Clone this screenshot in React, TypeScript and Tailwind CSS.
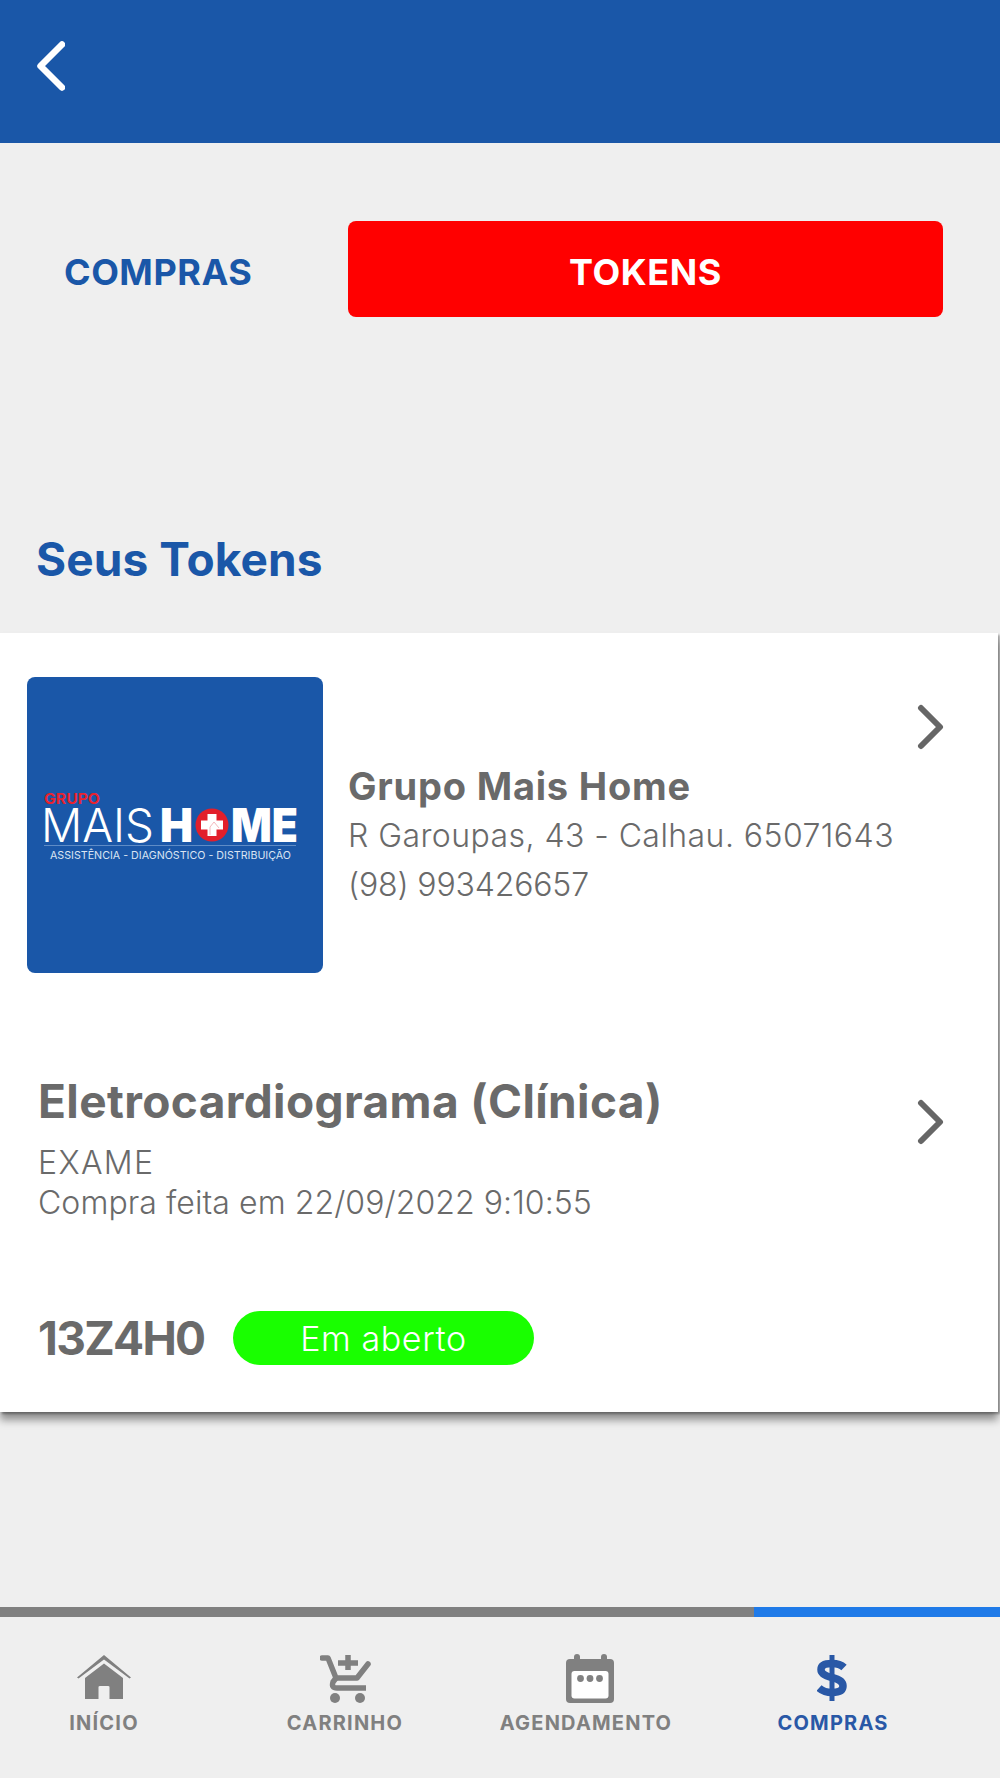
const font = "font-['Inter','Liberation_Sans',sans-serif]";

const Chevron = ({ className = "" }: { className?: string }) => (
  <svg viewBox="0 0 28 46" className={`h-[46px] w-[28px] shrink-0 ${className}`} fill="none" stroke="#666666" strokeWidth="6" strokeLinecap="round" strokeLinejoin="round">
    <path d="M4 4 L23 23 L4 42" />
  </svg>
);

const HomeIcon = () => (
  <svg viewBox="0 0 54 46" className="h-[46px] w-[54px]" fill="#808080">
    <path d="M0 22.5 L27 0 L54 22.5 L52.5 23.5 L27 4.5 L1.5 23.5 Z" />
    <path d="M8 23 L27 8.5 L46 23 V44 H32.5 V32 Q32.5 31 31 31 H23 Q21.5 31 21.5 32 V44 H8 Z" />
  </svg>
);

const CartIcon = () => (
  <svg viewBox="0 0 52 50" className="ml-[2px] h-[50px] w-[52px]" fill="none" stroke="#808080" strokeWidth="5.5" strokeLinecap="round" strokeLinejoin="round">
    <path d="M2 5 H8 L16 25 H37 L48 11" />
    <path d="M16 25 L13 29 Q11 35 17 35 H46" strokeLinecap="butt" />
    <path d="M28 2 V17 M18 10 H38" strokeLinecap="butt" strokeLinejoin="miter" />
    <circle cx="15" cy="45" r="5" fill="#808080" stroke="none" />
    <circle cx="40" cy="45" r="5" fill="#808080" stroke="none" />
  </svg>
);

const CalendarIcon = () => (
  <svg viewBox="0 0 48 49" className="ml-[7px] h-[49px] w-[48px]">
    <rect x="8" y="0" width="6" height="10" rx="3" fill="#808080" />
    <rect x="35" y="0" width="6" height="10" rx="3" fill="#808080" />
    <rect x="0" y="5" width="48" height="44" rx="4" fill="#808080" />
    <rect x="5.5" y="17" width="37" height="27.5" rx="3" fill="#ffffff" />
    <circle cx="14.5" cy="24.5" r="3.4" fill="#808080" />
    <circle cx="24" cy="24.5" r="3.4" fill="#808080" />
    <circle cx="33.5" cy="24.5" r="3.4" fill="#808080" />
  </svg>
);

const DollarIcon = () => (
  <svg viewBox="0 0 30 46" className="-ml-[2px] h-[46px] w-[30px]" fill="none" stroke="#2958a6" strokeWidth="7.5">
    <path d="M27 12.5 Q23 8.5 15 8.5 Q4 8.5 4 14.5 Q4 20 15 22.5 Q26 25 26 31 Q26 37.5 15 37.5 Q7 37.5 2 33" />
    <path d="M15 0 V46" strokeWidth="5" />
  </svg>
);

// logo is a picture in the reference, so it stays one drawing
const Logo = () => (
  <div className="h-[296px] w-[296px] shrink-0 overflow-hidden rounded-lg bg-[#1a57a8]">
    <svg viewBox="0 0 296 296" className="h-full w-full">
      <text x="17" y="127" fontFamily="Inter" fontWeight="700" fontSize="15" fill="#e8232f" textLength="56" lengthAdjust="spacingAndGlyphs">GRUPO</text>
      <text x="14" y="165" fontFamily="Inter" fontWeight="300" fontSize="47" fill="#ffffff" textLength="113" lengthAdjust="spacingAndGlyphs">MAIS</text>
      <text x="133" y="165" fontFamily="Inter" fontWeight="900" fontSize="47" fill="#ffffff" textLength="33" lengthAdjust="spacingAndGlyphs">H</text>
      <text x="204" y="165" fontFamily="Inter" fontWeight="900" fontSize="47" fill="#ffffff" textLength="67" lengthAdjust="spacingAndGlyphs">ME</text>
      <circle cx="185" cy="148" r="16.5" fill="#e21f2b" />
      <path d="M180.5 137 h9 v6.5 h6.5 v9 h-6.5 v6.5 h-9 v-6.5 h-6.5 v-9 h6.5 Z" fill="#ffffff" />
      <path d="M183 158 v-8 l4 -5 l5 6" fill="none" stroke="#f3b9bd" strokeWidth="1" />
      <rect x="17" y="168" width="252" height="1" fill="#5f8cc6" />
      <text x="23" y="182" fontFamily="Inter" fontWeight="400" fontSize="10.5" fill="#dbe5f3" textLength="241" lengthAdjust="spacingAndGlyphs">ASSISTÊNCIA - DIAGNÓSTICO - DISTRIBUIÇÃO</text>
    </svg>
  </div>
);

const navItems = [
  { label: "INÍCIO", icon: <HomeIcon />, active: false },
  { label: "CARRINHO", icon: <CartIcon />, active: false },
  { label: "AGENDAMENTO", icon: <CalendarIcon />, active: false },
  { label: "COMPRAS", icon: <DollarIcon />, active: true },
];

export default function App() {
  return (
    <div className={`flex h-[1778px] w-[1000px] flex-col overflow-hidden bg-[#efefef] ${font}`}>
      <header className="flex h-[143px] shrink-0 items-start bg-[#1a57a8] pl-[37px] pt-[41px]">
        <svg viewBox="0 0 28 50" className="h-[50px] w-[28px]" fill="none" stroke="#ffffff" strokeWidth="6.5" strokeLinecap="round" strokeLinejoin="round">
          <path d="M25 3.5 L3.5 25 L25 46.5" />
        </svg>
      </header>

      <div className="mt-[78px] flex h-[96px] shrink-0">
        <div className="flex w-[348px] items-center pl-[64px] pt-[6px] text-[36px] font-bold tracking-[0.5px] text-[#1a57a8]">COMPRAS</div>
        <div className="flex w-[595px] items-center justify-center rounded-lg bg-[#ff0000] pt-[5px] text-[36px] font-bold tracking-[0.6px] text-white">TOKENS</div>
      </div>

      <h1 className="mt-[216px] h-[100px] shrink-0 pl-[36px] text-[46px] leading-[52px] font-bold tracking-[0.1px] text-[#1a57a8]">Seus Tokens</h1>

      <section className="h-[779px] w-[998px] shrink-0 bg-white shadow-[0_8px_8px_rgba(0,0,0,0.4),2px_2px_2px_rgba(0,0,0,0.3)]">
        <div className="flex pl-[27px] pr-[53px] pt-[44px]">
          <Logo />
          <div className="ml-[25px] flex-1 pt-[84px] text-[#6a6a6a]">
            <p className="text-[38px] leading-[50px] font-bold tracking-[0.8px]">Grupo Mais Home</p>
            <p className="text-[32px] leading-[49px] font-[350] tracking-[0.44px]">R Garoupas, 43 - Calhau. 65071643</p>
            <p className="text-[32px] leading-[50px] font-[350] tracking-[-0.16px]">(98) 993426657</p>
          </div>
          <Chevron className="mt-[27px]" />
        </div>

        <div className="mt-[98px] flex pl-[38px] pr-[53px]">
          <div className="flex-1 text-[#6a6a6a]">
            <p className="text-[46px] leading-[60px] font-bold tracking-[0.38px]">Eletrocardiograma (Clínica)</p>
            <p className="mt-[12px] text-[32px] leading-[40px] font-[350] tracking-[1.35px]">EXAME</p>
            <p className="text-[32px] leading-[40px] font-[350] tracking-[0.07px]">Compra feita em 22/09/2022 9:10:55</p>
          </div>
          <Chevron className="mt-[28px]" />
        </div>

        <div className="mt-[88px] flex items-center pl-[38px]">
          <span className="w-[195px] text-[46px] leading-[54px] font-bold tracking-[-1.7px] text-[#6a6a6a]">13Z4H0</span>
          <span className="flex h-[54px] w-[301px] items-center justify-center rounded-full bg-[#19ff00] text-[34px] font-light tracking-[0.6px] text-white">Em aberto</span>
        </div>
      </section>

      <div className="mt-[195px] flex h-[10px] shrink-0">
        <div className="w-[754px] bg-[#808080]" />
        <div className="flex-1 bg-[#1f7ae8]" />
      </div>

      <nav className="grid grid-cols-[208px_274px_208px_286px] pt-[35px]">
        {navItems.map((item) => (
          <div key={item.label} className="flex flex-col items-center">
            <div className="flex h-[52px] items-center justify-center">{item.icon}</div>
            <span className={`mt-[7px] text-[20px] leading-[24px] font-bold tracking-[1.2px] ${item.active ? "text-[#2958a6]" : "text-[#808080]"}`}>{item.label}</span>
          </div>
        ))}
      </nav>
    </div>
  );
}
